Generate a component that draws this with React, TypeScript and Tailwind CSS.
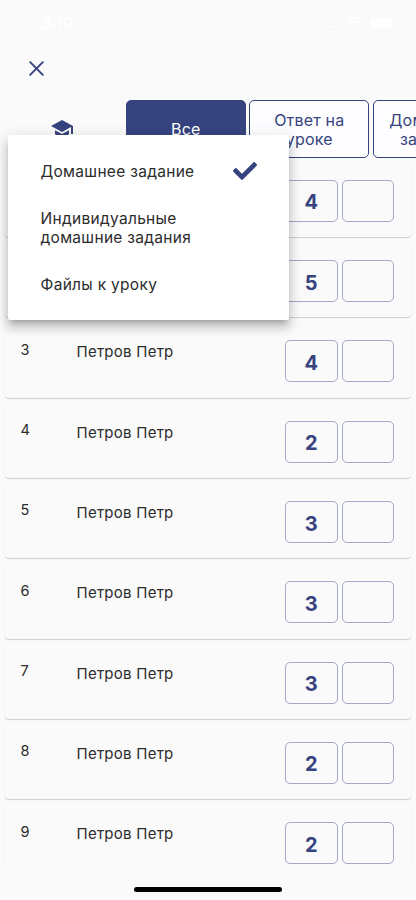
import React from "react";
import { FaCheck } from "react-icons/fa";

const grades = [4, 5, 4, 2, 3, 3, 3, 2, 2];

function StatusBar() {
  return (
    <div className="flex h-[44px] items-start justify-between pr-[24px] pl-[41px] text-white">
      <span className="mt-[13px] text-[16px] leading-[20px] font-semibold">3:19</span>
      <div className="mt-[17px] flex items-center gap-[8px]">
        <span className="mt-[8px] h-px w-[17px] bg-white" />
        <svg className="h-[11px] w-[15px]" viewBox="0 0 16 12" fill="none" stroke="currentColor" strokeWidth="2">
          <path d="M1 4.2a10 10 0 0 1 14 0M3.5 7a6.4 6.4 0 0 1 9 0" />
          <path d="M8 11.5 5.8 9.3a3.2 3.2 0 0 1 4.4 0Z" fill="currentColor" stroke="none" />
        </svg>
        <span className="h-[10px] w-[22px] rounded-[3px] bg-white" />
      </div>
    </div>
  );
}

function Tab({ children, active = false }: { children: React.ReactNode; active?: boolean }) {
  return (
    <div
      className={
        "flex h-[58px] w-[119.6px] shrink-0 items-center justify-center rounded-[5px] border-[1.5px] border-[#36437e] pt-[1px] text-center text-[16px] leading-[19px] tracking-[0.2px] " +
        (active ? "bg-[#36437e] text-white" : "bg-[#fdfdff] text-[#36437e]")
      }
    >
      {children}
    </div>
  );
}

function GradeBox({ value }: { value?: number }) {
  return (
    <div className="flex h-[42px] w-[52.5px] items-center justify-center rounded-[5px] border border-[#a5a9c8] pt-[3px] text-[20px] leading-[24px] font-bold text-[#36437e]">
      {value}
    </div>
  );
}

function StudentRow({ index, grade }: { index: number; grade: number }) {
  return (
    <div className="mb-[4px] flex h-[76.33px] shrink-0 rounded-[4px] bg-[#fafafa] pl-[16px] shadow-[0_1px_1px_rgba(0,0,0,0.18),0_0_1px_rgba(0,0,0,0.06)]">
      <span className="mt-[19.2px] w-[56px] text-[14.5px] leading-[18px] text-[#2c2c2c]">{index}</span>
      <span className="mt-[21.1px] flex-1 text-[15px] leading-[20px] tracking-[0.25px] text-[#2c2c2c]">Петров Петр</span>
      <div className="mt-[19px] mr-[17px] flex gap-[4px]">
        <GradeBox value={grade} />
        <GradeBox />
      </div>
    </div>
  );
}

function LessonMenu() {
  return (
    <div className="absolute top-[135px] left-[8px] flex h-[185px] w-[281px] flex-col rounded-[2px] bg-white pt-[26px] pl-[32.5px] text-[15.5px] leading-[19px] tracking-[0.3px] text-[#2c2c2c] shadow-[0_5px_5px_-3px_rgba(0,0,0,0.2),0_8px_10px_1px_rgba(0,0,0,0.14),0_3px_14px_2px_rgba(0,0,0,0.1)]">
      <div className="flex h-[20px] items-center justify-between pr-[32px]">
        <span>Домашнее задание</span>
        <FaCheck className="h-[24px] w-[24px] text-[#36437e]" />
      </div>
      <div className="mt-[28px]">Индивидуальные<br />домашние задания</div>
      <div className="mt-[28px]">Файлы к уроку</div>
    </div>
  );
}

export default function App() {
  return (
    <div className="relative flex h-[900px] w-[416px] flex-col overflow-hidden bg-[#fafafa] font-['Inter','Noto_Sans',sans-serif]">
      <StatusBar />
      <div className="flex h-[56px] items-center pl-[29px]">
        <svg className="-mt-[7px] h-[15px] w-[15px]" viewBox="0 0 15 15" fill="none" stroke="#36437e" strokeWidth="1.9" strokeLinecap="round">
          <path d="m1.2 1.2 12.6 12.6M13.8 1.2 1.2 13.8" />
        </svg>
      </div>
      <div className="flex h-[58px] shrink-0">
        <div className="w-[126px] shrink-0 pt-[17px] pl-[50px]">
          <svg className="h-[24px] w-[24px]" viewBox="0 0 24 24" fill="#36437e">
            <path d="M5 13.18v4L12 21l7-3.82v-4L12 17l-7-3.82zM12 3 1 9l11 6 9-4.91V17h2V9L12 3z" />
          </svg>
        </div>
        <div className="flex gap-[3.9px]">
          <Tab active>Все</Tab>
          <Tab>Ответ на<br />уроке</Tab>
          <Tab>Домашнее<br />задание</Tab>
        </div>
      </div>
      <div className="mt-[2px] flex h-[706px] shrink-0 flex-col overflow-hidden pr-[5px] pl-[4.5px] pt-[0.7px]">
        {grades.map((grade, i) => (
          <StudentRow key={i} index={i + 1} grade={grade} />
        ))}
      </div>
      <div className="mt-[20.5px] ml-[134px] h-[5px] w-[148px] shrink-0 rounded-full bg-black" />
      <LessonMenu />
    </div>
  );
}
